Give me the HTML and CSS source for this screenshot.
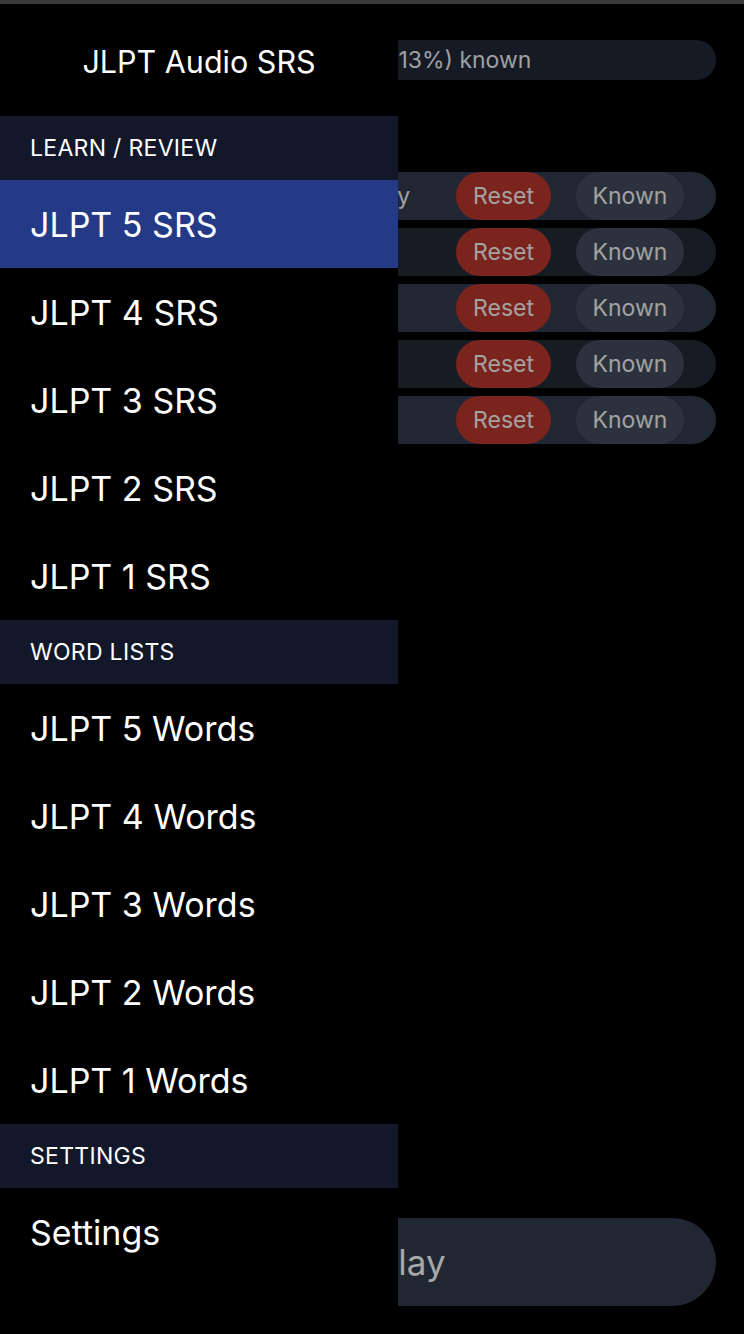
FILE: index.html
```html
<!DOCTYPE html>
<html>
<head>
<meta charset="utf-8">
<link rel="stylesheet" href="styles.css">
</head>
<body>
<div class="app">
  <main class="content">
    <div class="progress">(13%) known</div>
    <div class="rows">
      <div class="row alt"><span class="label">Day</span><span class="btn reset">Reset</span><span class="btn known">Known</span></div>
      <div class="row"><span class="label"></span><span class="btn reset">Reset</span><span class="btn known">Known</span></div>
      <div class="row alt"><span class="label"></span><span class="btn reset">Reset</span><span class="btn known">Known</span></div>
      <div class="row"><span class="label"></span><span class="btn reset">Reset</span><span class="btn known">Known</span></div>
      <div class="row alt"><span class="label"></span><span class="btn reset">Reset</span><span class="btn known">Known</span></div>
    </div>
    <div class="spacer"></div>
    <div class="play">Play</div>
  </main>
  <nav class="drawer">
    <div class="drawer-title">JLPT Audio SRS</div>
    <div class="section">LEARN / REVIEW</div>
    <div class="item active">JLPT 5 SRS</div>
    <div class="item">JLPT 4 SRS</div>
    <div class="item">JLPT 3 SRS</div>
    <div class="item">JLPT 2 SRS</div>
    <div class="item">JLPT 1 SRS</div>
    <div class="section">WORD LISTS</div>
    <div class="item">JLPT 5 Words</div>
    <div class="item">JLPT 4 Words</div>
    <div class="item">JLPT 3 Words</div>
    <div class="item">JLPT 2 Words</div>
    <div class="item">JLPT 1 Words</div>
    <div class="section">SETTINGS</div>
    <div class="item">Settings</div>
  </nav>
</div>
</body>
</html>
```
FILE: styles.css
```css
* { box-sizing: border-box; }
html, body { margin: 0; padding: 0; background: #000; }
body {
  font-family: Inter, "Noto Sans", sans-serif;
  color: #fff;
  width: 744px;
  height: 1334px;
  overflow: hidden;
  border-top: 4px solid #3a3a3c;
}
.app {
  position: relative;
  height: 1330px;
}
.content {
  display: flex;
  flex-direction: column;
  height: 100%;
  padding: 36px 28px 28px 28px;
}
.progress {
  height: 40px;
  border-radius: 20px;
  background: #161a24;
  color: #a0a0a4;
  font-size: 23px;
  line-height: 40px;
  padding-left: 362px;
  white-space: nowrap;
}
.rows {
  margin-top: 92px;
  display: flex;
  flex-direction: column;
  gap: 8px;
}
.row {
  height: 48px;
  border-radius: 24px;
  background: #161b24;
  display: flex;
  align-items: center;
  padding-right: 32px;
}
.row.alt { background: #212732; }
.label {
  flex: 1;
  color: #a0a0a4;
  font-size: 23px;
  padding-left: 340px;
}
.btn {
  height: 48px;
  border-radius: 24px;
  display: flex;
  align-items: center;
  justify-content: center;
  font-size: 23px;
  color: #a3a3a3;
}
.reset { width: 95px; background: #7b241d; margin-right: 25px; }
.known { width: 108px; background: #2c323d; }
.spacer { flex: 1; }
.play {
  height: 88px;
  border-radius: 44px;
  background: #212732;
  color: #a8a8a8;
  font-size: 35px;
  line-height: 88px;
  padding-left: 348px;
}
.drawer {
  position: absolute;
  top: 0;
  left: 0;
  width: 398px;
  height: 100%;
  background: #000;
  display: flex;
  flex-direction: column;
}
.drawer-title {
  height: 112px;
  display: flex;
  align-items: center;
  justify-content: center;
  padding-top: 2px;
  font-size: 30.5px;
  font-weight: 400;
}
.section {
  height: 64px;
  background: #12172a;
  display: flex;
  align-items: center;
  padding-left: 30px;
  font-size: 23px;
  letter-spacing: 0.3px;
}
.item {
  height: 88px;
  display: flex;
  align-items: center;
  padding-left: 30px;
  font-size: 34px;
}
.item.active { background: #253a86; }
```
